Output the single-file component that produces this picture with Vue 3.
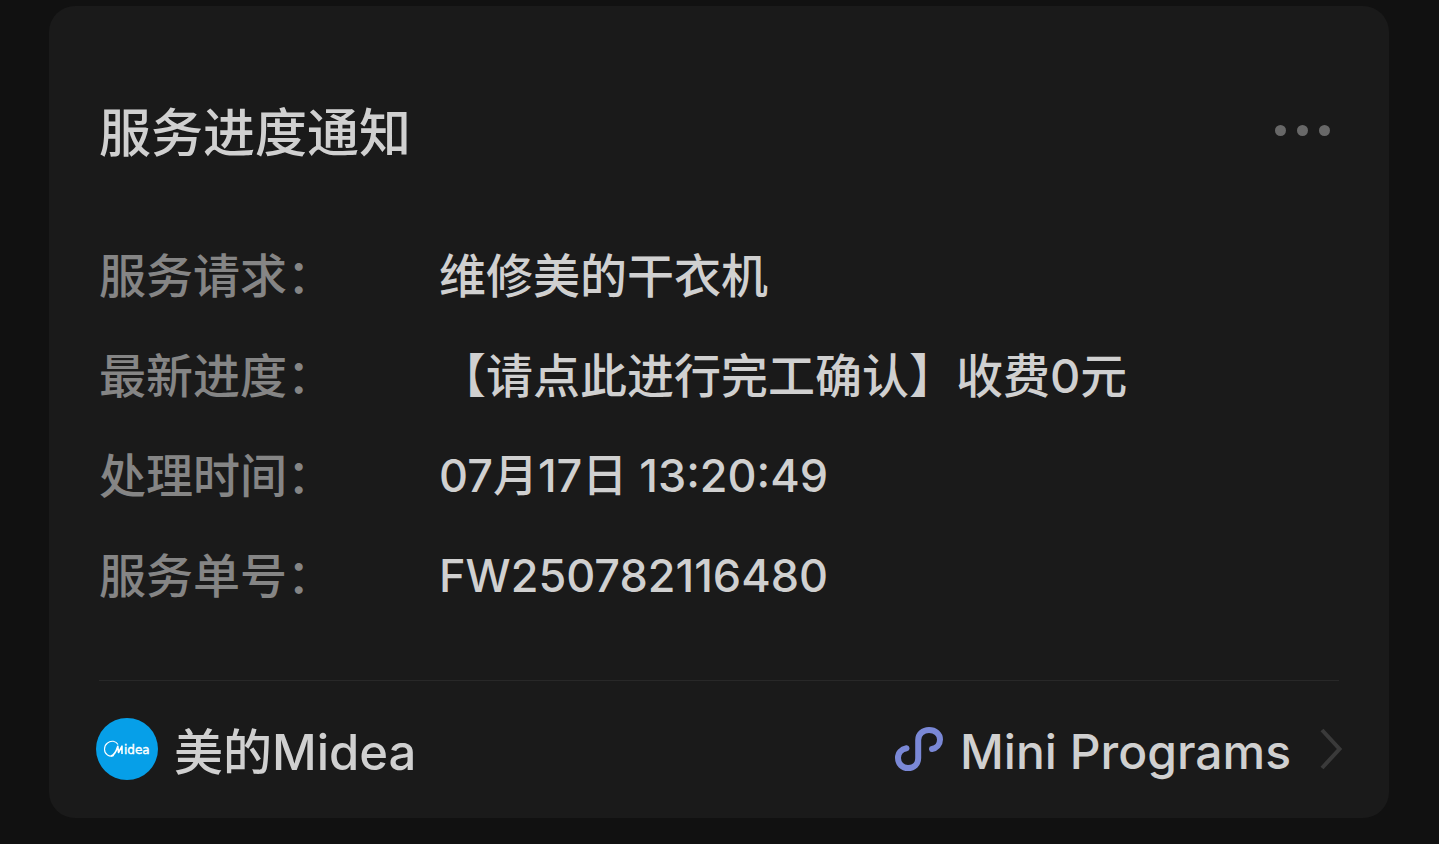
<script setup>
const rows = [
  { label: '服务请求：', value: '维修美的干衣机' },
  { label: '最新进度：', value: '【请点此进行完工确认】收费0元' },
  { label: '处理时间：', value: '07月17日 13:20:49', numeric: true },
  { label: '服务单号：', value: 'FW250782116480', numeric: true },
]
</script>

<template>
  <main class="page">
    <article class="card">
      <header class="head">
        <h1 class="title">服务进度通知</h1>
        <button class="more" type="button" aria-label="更多">
          <span class="dot"></span>
          <span class="dot"></span>
          <span class="dot"></span>
        </button>
      </header>

      <dl class="details">
        <div v-for="row in rows" :key="row.label" class="row">
          <dt>{{ row.label }}</dt>
          <dd :class="{ numeric: row.numeric }">{{ row.value }}</dd>
        </div>
      </dl>

      <footer class="foot">
        <a class="brand" href="#">
          <svg class="logo" viewBox="0 0 62 62" aria-hidden="true">
            <circle cx="31" cy="31" r="31" fill="#069fe8" />
            <path d="M22 26.500 C20 23 15 22 11.500 25 C7.500 28 7.500 34.500 11.500 37 C13.500 38.300 16 38.300 18 37.500" fill="none" stroke="#fff" stroke-width="1.1" />
            <path d="M15 38 C18.500 37 20.500 32.500 21.800 28.200 L22.500 34.500 L26 28.200 V36" fill="none" stroke="#fff" stroke-width="1.6" stroke-linejoin="round" />
            <text class="logo-text" x="28" y="36">idea</text>
          </svg>
          <span>美的Midea</span>
        </a>
        <a class="program" href="#">
          <svg class="program-icon" viewBox="0 0 50 46" fill="none" aria-hidden="true">
            <path d="M12.5 22.3 C7.5 23.2 4 27 4 32 C4 38 8.4 42 14 42 C20 42 24.2 38 24.2 32 V14 C24.2 8 29 4 35 4 C41.500 4 46 8 46 13.500 C46 18.500 42.500 22.300 38 23" stroke="#7a88d6" stroke-width="6" stroke-linecap="round" />
          </svg>
          <span class="program-name">Mini Programs</span>
          <svg class="chevron" viewBox="0 0 24 44" fill="none" aria-hidden="true">
            <path d="M3 3 L20.500 22 L3 41" stroke="#3a3a3a" stroke-width="4" />
          </svg>
        </a>
      </footer>
    </article>
  </main>
</template>

<style>
body {
  background: #111;
}
</style>

<style scoped>
.page {
  padding: 6px 50px 26px 49px;
  font-family: Inter, "Noto Sans CJK SC", sans-serif;
  font-weight: 500;
  color: #d0d0d0;
}

.card {
  padding: 0 50px;
  border-radius: 26px;
  background: #1a1a1a;
}

.head {
  display: flex;
  align-items: center;
  justify-content: space-between;
  padding: 84px 4px 0 0;
}

.title {
  margin: 0;
  padding-top: 8px;
  font-size: 52px;
  line-height: 72px;
  font-weight: 500;
}

.more {
  display: flex;
  gap: 11px;
  padding: 5px;
  border: 0;
  background: none;
}

.dot {
  width: 11px;
  height: 11px;
  border-radius: 50%;
  background: #686868;
}

.details {
  margin: 0;
  padding: 56px 0 54px;
}

.row {
  display: grid;
  grid-template-columns: 340px 1fr;
  font-size: 47px;
  line-height: 100px;
}

dt {
  color: #858585;
}

dd {
  margin: 0;
}

.numeric {
  font-size: 45px;
}

.foot {
  display: flex;
  align-items: center;
  justify-content: space-between;
  height: 135px;
  padding-bottom: 2px;
  border-top: 1px solid #282828;
  font-size: 49px;
}

.foot a {
  display: flex;
  align-items: center;
  color: inherit;
  text-decoration: none;
}

.brand {
  gap: 16px;
  margin-left: -3px;
}

.logo {
  width: 62px;
  height: 62px;
}

.logo-text {
  font-family: "DejaVu Sans", sans-serif;
  font-size: 12px;
  font-weight: 400;
  fill: #fff;
  stroke: #fff;
  stroke-width: 0.4px;
}

.program-icon {
  width: 50px;
  height: 46px;
  margin-right: 16px;
}

.program-name {
  padding-top: 6px;
  font-size: 48px;
}

.chevron {
  width: 24px;
  height: 44px;
  margin: 0 -4px 0 28px;
}
</style>
